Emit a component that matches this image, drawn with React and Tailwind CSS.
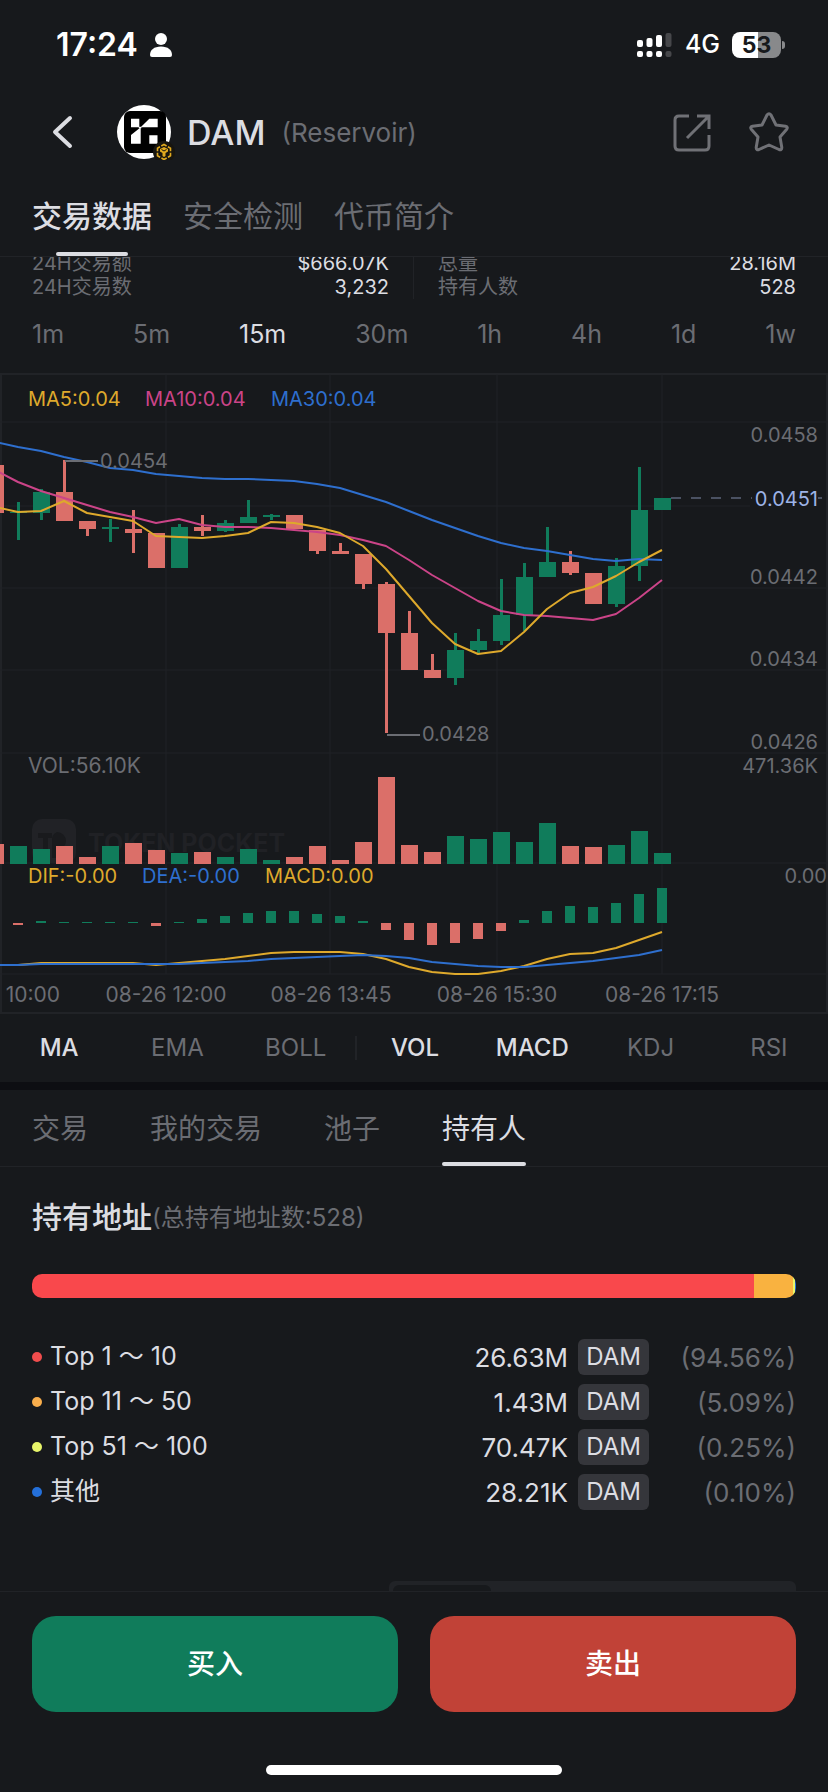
import React, { useState } from 'react'

const UP = '#107c5b'
const DOWN = '#db6f69'
const YELLOW = '#dea92c'
const PINK = '#cb4488'
const BLUE = '#2e6fce'
const LABEL = '#6b6d73'
const GRID = '#212327'

const STEP = 23
const VOL_BASE = 494
const MACD_BASE = 553

// [up, body top, body bottom, wick top, wick bottom, volume top, macd]
const candles = [
    [0, 95, 143, 95, 143, 474, -1],
    [1, 142, 143, 132, 170, 476, -2],
    [1, 122, 143, 119, 150, 479, 2],
    [0, 122, 151, 90, 151, 476, 1],
    [0, 151, 159, 151, 166, 487, 1],
    [1, 157, 159, 149, 172, 476, 1],
    [0, 159, 163, 140, 183, 473, 1],
    [0, 163, 198, 163, 198, 480, -3],
    [1, 157, 198, 154, 198, 483, 1],
    [0, 157, 161, 145, 166, 482, 4],
    [1, 153, 161, 150, 162, 487, 7],
    [1, 147, 153, 130, 153, 479, 10],
    [1, 145, 147, 144, 150, 490, 12],
    [0, 145, 159, 145, 159, 487, 12],
    [0, 160, 181, 160, 184, 476, 9],
    [0, 181, 184, 173, 184, 490, 7],
    [0, 184, 214, 184, 219, 472, 2],
    [0, 214, 263, 212, 363, 407, -7],
    [0, 263, 300, 241, 300, 475, -17],
    [0, 300, 308, 284, 308, 482, -22],
    [1, 280, 308, 263, 315, 466, -20],
    [1, 271, 280, 259, 283, 469, -16],
    [1, 245, 271, 209, 275, 462, -8],
    [1, 207, 245, 193, 261, 472, 3],
    [1, 192, 207, 157, 207, 453, 12],
    [0, 192, 203, 181, 205, 476, 17],
    [0, 203, 234, 203, 234, 477, 16],
    [1, 196, 234, 188, 237, 475, 20],
    [1, 140, 196, 97, 211, 461, 29],
    [1, 128, 140, 128, 140, 483, 35],
]

const ma5 = [137, 142, 141, 131, 143, 147, 151, 166, 167, 168, 166, 163, 152, 153, 157, 163, 176, 199, 226, 253, 274, 284, 281, 262, 239, 223, 217, 206, 192, 180]
const ma10 = [100, 112, 121, 128, 135, 142, 147, 153, 149, 155, 157, 157, 158, 160, 162, 165, 170, 176, 190, 205, 218, 231, 241, 245, 246, 248, 250, 244, 228, 210]
const ma30 = [72, 77, 81, 87, 92, 98, 100, 104, 106, 108, 109, 109, 110, 111, 114, 118, 125, 132, 141, 150, 158, 166, 173, 178, 181, 185, 189, 191, 189, 190]
const dif = [595, 595, 593, 593, 593, 593, 593, 595, 593, 591, 589, 586, 583, 582, 582, 582, 584, 589, 597, 602, 604, 604, 601, 596, 589, 584, 583, 578, 570, 562]
const dea = [595, 595, 594, 594, 594, 594, 594, 594, 594, 593, 592, 591, 589, 588, 587, 586, 585, 586, 588, 592, 594, 596, 597, 597, 595, 593, 591, 588, 585, 580]

const x = (i) => i * STEP - 5
const points = (values) => values.map((y, i) => `${x(i)},${y}`).join(' ')

const Line = ({ values, color }) => (
    <polyline points={points(values)} fill="none" stroke={color} strokeWidth="2" strokeLinejoin="round" />
)

const Chart = () => (
    <svg viewBox="0 0 828 644" className="block w-full" fontSize="20" fill={LABEL} role="img" aria-label="DAM 15m">
        {/* Grid */}
        <g stroke={GRID} strokeWidth="2">
            <path d="M0 4H828M0 643H828M1 4V643M827 4V643" />
            <path d="M0 52H828M0 136H750M0 218H828M0 300H828M0 383H828M0 493H828M0 604H828" strokeWidth="1" />
            <path d="M166 4V604M330 4V604M497 4V604M662 4V604" strokeWidth="1" />
        </g>

        {/* Watermark */}
        <rect x="32" y="449" width="44" height="44" rx="10" fill="#212226" />
        <path d="M38 463h14v5h-4v18h-5v-18h-5zM57 462a9 9 0 1 1 0 18v8h-5v-17a9 9 0 0 1 5-9z" fill="#191a1d" />
        <text x="88" y="482" fontSize="25" fontWeight="700" fill="#202125">TOKEN POCKET</text>

        {candles.map(([up, top, bottom, high, low, vol, macd], i) => (
            <g key={i} fill={up ? UP : DOWN}>
                <rect x={x(i) - 8} y={top} width="17" height={bottom - top} />
                <rect x={x(i) - 1} y={high} width="3" height={low - high} />
                <rect x={x(i) - 8} y={vol} width="17" height={VOL_BASE - vol} />
                <rect
                    x={x(i) - 5}
                    y={macd > 0 ? MACD_BASE - macd : MACD_BASE}
                    width="10"
                    height={Math.abs(macd)}
                    fill={macd > 0 ? UP : DOWN}
                />
            </g>
        ))}

        <Line values={ma30} color={BLUE} />
        <Line values={ma10} color={PINK} />
        <Line values={ma5} color={YELLOW} />
        <Line values={dif} color={YELLOW} />
        <Line values={dea} color={BLUE} />

        {/* High / low markers */}
        <path d="M65 91H98M387 365H420" stroke={LABEL} strokeWidth="2" />
        <text x="100" y="98">0.0454</text>
        <text x="422" y="371">0.0428</text>

        {/* Current price */}
        <path d="M671 128H752M818 128H822" stroke="#7f8aa8" strokeWidth="1" strokeDasharray="10 10" />
        <text x="818" y="136" textAnchor="end" fill="#9db3e6">0.0451</text>

        <text x="28" y="36" fill={YELLOW}>MA5:0.04</text>
        <text x="145" y="36" fill={PINK}>MA10:0.04</text>
        <text x="271" y="36" fill={BLUE}>MA30:0.04</text>
        <text x="28" y="403" fontSize="21">VOL:56.10K</text>
        <text x="28" y="513" fill={YELLOW}>DIF:-0.00</text>
        <text x="142" y="513" fill={BLUE}>DEA:-0.00</text>
        <text x="265" y="513" fill={YELLOW}>MACD:0.00</text>

        <g textAnchor="end">
            <text x="818" y="72">0.0458</text>
            <text x="818" y="214">0.0442</text>
            <text x="818" y="296">0.0434</text>
            <text x="818" y="379">0.0426</text>
            <text x="818" y="403">471.36K</text>
            <text x="827" y="513">0.00</text>
            <text x="60" y="632" fontSize="21">10:00</text>
        </g>
        <g textAnchor="middle" fontSize="21">
            <text x="166" y="632">08-26 12:00</text>
            <text x="331" y="632">08-26 13:45</text>
            <text x="497" y="632">08-26 15:30</text>
            <text x="662" y="632">08-26 17:15</text>
        </g>
    </svg>
)

const StatusBar = () => (
    <div className="flex h-[90px] items-center justify-between pr-[43px] pl-14 text-white">
        <div className="flex items-center gap-3">
            <span className="text-[32px] font-semibold">17:24</span>
            <svg className="h-6 w-[22px]" viewBox="0 0 22 24" fill="currentColor">
                <circle cx="11" cy="6" r="6" />
                <path d="M0 22C0 17 4 13.500 11 13.500S22 17 22 22Q22 24 20 24H2Q0 24 0 22z" />
            </svg>
        </div>
        <div className="flex items-center gap-3">
            <svg className="h-[26px] w-9" viewBox="0 0 36 26" fill="currentColor">
                <rect x="0" y="8" width="6" height="7" rx="2" />
                <rect x="0" y="19" width="6" height="6" rx="2" />
                <rect x="9.500" y="6" width="6" height="9" rx="2" />
                <rect x="9.500" y="19" width="6" height="6" rx="2" />
                <rect x="19" y="3" width="6" height="12" rx="2" />
                <rect x="19" y="19" width="6" height="6" rx="2" />
                <g fill="#46474a">
                    <rect x="28.500" y="1" width="6" height="14" rx="2" />
                    <rect x="28.500" y="19" width="6" height="6" rx="2" />
                </g>
            </svg>
            <span className="text-[25px] font-medium">4G</span>
            <div className="flex items-center gap-px">
                <div className="flex h-[26px] w-[49px] items-center justify-center rounded-lg bg-linear-to-r from-white from-53% to-[#88898b] to-53% text-[23px] font-bold text-[#17191c]">
                    53
                </div>
                <div className="h-2 w-[3px] rounded-r-full bg-[#88898b]" />
            </div>
        </div>
    </div>
)

const TokenLogo = () => (
    <svg className="h-14 w-[58px]" viewBox="0 0 58 56">
        <circle cx="27" cy="28" r="27" fill="#fff" />
        <rect x="7" y="7" width="42" height="42" rx="6" fill="#000" />
        <path d="M14 14.700h8.300v8.600H14zM23.700 23.300l8.600-8.600h8.400v8.600zM23.700 23.300v16.400H14V31zM32.300 31.300h8.200v8.400h-8.200z" fill="#fff" />
        <path d="M21.800 22.800h2.600v1.400h-2.600z" fill="#fff" />
        <circle cx="47" cy="48" r="11" fill="#17150f" />
        <path d="M47 40.500l6.500 3.700v7.600L47 55.500l-6.500-3.700v-7.600z" fill="none" stroke="#e0a91f" strokeWidth="1.600" strokeDasharray="6 1.500" strokeDashoffset="3" />
        <path d="M43 45l4-2 4 2v2.500l-2.500 1.500v3L47 53l-1.500-1v-3L43 47.500z" fill="#e0a91f" />
        <path d="M44.500 45.500L47 47l2.500-1.500" fill="none" stroke="#17150f" />
    </svg>
)

const Header = () => (
    <header className="flex h-[84px] items-center pr-[39px] pl-[51px]">
        <button aria-label="返回" className="w-[66px]">
            <svg className="h-9 w-6" viewBox="0 0 24 36" fill="none" stroke="#dcdde2" strokeWidth="4" strokeLinecap="round" strokeLinejoin="round">
                <path d="M19 4L4 18l15 14" />
            </svg>
        </button>
        <TokenLogo />
        <h1 className="ml-3 text-[34px] font-medium text-[#dcdde2]">DAM</h1>
        <span className="ml-4 text-[26px] text-[#6b6d73]">(Reservoir)</span>
        <div className="ml-auto flex gap-9 text-[#707176]">
            <button aria-label="分享">
                <svg className="size-10" viewBox="0 0 40 40" fill="none" stroke="currentColor" strokeWidth="3">
                    <path d="M16 4H6Q2 4 2 8v26q0 4 4 4h26q4 0 4-4V23M24 4h12v13M36 4L14 26" />
                </svg>
            </button>
            <button aria-label="收藏">
                <svg className="size-10" viewBox="0 0 40 40" fill="none" stroke="currentColor" strokeWidth="3" strokeLinejoin="round">
                    <path d="M18 3Q20 .500 22 3l5 10 9.500 1.300q3 .700 1 3.200L31 25l1.800 10.500q0 3-2.800 2L20 33l-10 4.500q-2.800 1-2.800-2L9 25l-6.500-7.500q-2-2.500 1-3.200L13 13z" />
                </svg>
            </button>
        </div>
    </header>
)

const topTabs = ['交易数据', '安全检测', '代币简介']
const stats = [
    [['24H交易额', '$666.07K'], ['24H交易数', '3,232']],
    [['总量', '28.16M'], ['持有人数', '528']],
]
const intervals = ['1m', '5m', '15m', '30m', '1h', '4h', '1d', '1w']
const indicators = ['MA', 'EMA', 'BOLL', 'VOL', 'MACD', 'KDJ', 'RSI']
const listTabs = ['交易', '我的交易', '池子', '持有人']
const holders = [
    { label: 'Top 1 ～ 10', amount: '26.63M', percent: 94.56, text: '94.56', dot: 'bg-[#f14d4d]', bar: 'bg-[#f9484c]' },
    { label: 'Top 11 ～ 50', amount: '1.43M', percent: 5.09, text: '5.09', dot: 'bg-[#f9ae4c]', bar: 'bg-[#f9b240]' },
    { label: 'Top 51 ～ 100', amount: '70.47K', percent: 0.25, text: '0.25', dot: 'bg-[#e8f56a]', bar: 'bg-[#e8f56a]' },
    { label: '其他', amount: '28.21K', percent: 0.1, text: '0.10', dot: 'bg-[#2470da]', bar: 'bg-[#2470da]' },
]

const App = () => {
    const [tab, setTab] = useState('交易数据')
    const [interval, setInterval] = useState('15m')
    const [active, setActive] = useState(['MA', 'VOL', 'MACD'])
    const [listTab, setListTab] = useState('持有人')

    const toggle = (name) => {
        setActive(prev => prev.includes(name) ? prev.filter(n => n !== name) : [...prev, name])
    }

    return (
        <div className="flex min-h-screen flex-col bg-[#17191c] font-['Inter','Noto_Sans_CJK_SC',sans-serif] text-[#dcdde2]">
            <StatusBar />
            <Header />

            <nav className="flex h-[83px] gap-[31px] border-b border-[#212327] px-8">
                {topTabs.map(name => (
                    <button
                        key={name}
                        onClick={() => setTab(name)}
                        className={`flex flex-col items-center justify-between pt-5 text-[30px] ${tab === name ? "font-medium" : "text-[#6b6d73]"}`}
                    >
                        {name}
                        <span className={`h-1 w-[72px] rounded-full ${tab === name ? "bg-[#dcdde2]" : ""}`} />
                    </button>
                ))}
            </nav>

            {/* Stats, scrolled partly under the tabs */}
            <div className="overflow-hidden">
                <div className="-mt-1.5 grid grid-cols-2 text-xl leading-6">
                    {stats.map((column, i) => (
                        <dl key={i} className={i === 0 ? "border-r border-[#212327] pr-6 pl-8" : "pr-8 pl-6"}>
                            {column.map(([name, value]) => (
                                <div key={name} className="flex justify-between">
                                    <dt className="text-[#6b6d73]">{name}</dt>
                                    <dd>{value}</dd>
                                </div>
                            ))}
                        </dl>
                    ))}
                </div>
            </div>

            <div className="flex h-[71px] items-center justify-between px-8 text-[25px]">
                {intervals.map(name => (
                    <button
                        key={name}
                        onClick={() => setInterval(name)}
                        className={interval === name ? "" : "text-[#6b6d73]"}
                    >
                        {name}
                    </button>
                ))}
            </div>

            <Chart />

            <div className="grid h-[68px] grid-cols-7 items-center text-2xl">
                {indicators.map(name => (
                    <button
                        key={name}
                        onClick={() => toggle(name)}
                        className={`h-6 leading-6 ${name === 'VOL' ? "border-l-2 border-[#212327]" : ""} ${active.includes(name) ? "font-medium" : "text-[#6b6d73]"}`}
                    >
                        {name}
                    </button>
                ))}
            </div>
            <div className="h-2 bg-[#0d0e12]" />

            <nav className="flex h-[77px] gap-[62px] border-b border-[#212327] px-8">
                {listTabs.map(name => (
                    <button
                        key={name}
                        onClick={() => setListTab(name)}
                        className={`flex flex-col justify-between pt-[18px] text-[28px] ${listTab === name ? "" : "text-[#6b6d73]"}`}
                    >
                        {name}
                        <span className={`h-1 w-full rounded-full ${listTab === name ? "bg-[#dcdde2]" : ""}`} />
                    </button>
                ))}
            </nav>

            <section className="flex flex-col px-8 pt-7">
                <h2 className="flex items-center text-[30px] font-medium">
                    持有地址
                    <span className="text-2xl font-normal text-[#6b6d73]">(总持有地址数:528)</span>
                </h2>

                <div className="mt-[34px] flex h-6 overflow-hidden rounded-[10px]">
                    {holders.map(h => (
                        <div key={h.label} className={h.bar} style={{ width: `${h.percent}%` }} />
                    ))}
                </div>

                <ul className="mt-[41px] flex flex-col gap-[9px] text-[26px]">
                    {holders.map(h => (
                        <li key={h.label} className="flex h-9 items-center">
                            <span className={`mr-2 size-2.5 rounded-full ${h.dot}`} />
                            <span className="text-[25px]">{h.label}</span>
                            <span className="ml-auto">{h.amount}</span>
                            <span className="ml-2.5 flex h-9 w-[71px] items-center justify-center rounded-md bg-[#35363b] text-2xl">DAM</span>
                            <span className="w-[147px] text-right text-[#6b6d73]">({h.text}%)</span>
                        </li>
                    ))}
                </ul>
            </section>

            {/* Top edge of the next section's switch */}
            <div className="mt-auto flex justify-end px-8">
                <div className="h-2.5 w-[407px] rounded-t-md bg-[#212327] px-1 pt-1">
                    <div className="h-1.5 w-[98px] rounded-t-md bg-[#17191c]" />
                </div>
            </div>

            <footer className="border-t border-[#212327] px-8 pt-6 pb-[17px]">
                <div className="flex gap-8 text-[28px] font-medium text-white">
                    <button className="h-24 flex-1 rounded-3xl bg-[#107c5b]">买入</button>
                    <button className="h-24 flex-1 rounded-3xl bg-[#c14237]">卖出</button>
                </div>
                <div className="mx-auto mt-[53px] h-2.5 w-[296px] rounded-full bg-white" />
            </footer>
        </div>
    )
}

export default App
